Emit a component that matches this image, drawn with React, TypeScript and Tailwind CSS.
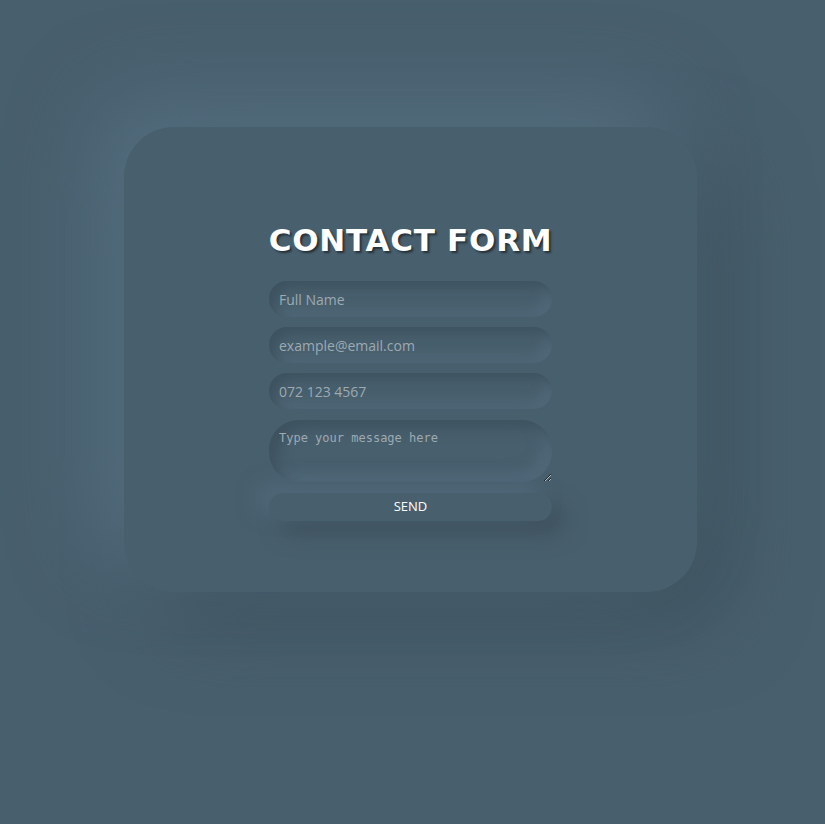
export default function App() {
  const field =
    'w-full h-[36px] rounded-full bg-[#485f6d] px-[10px] text-[14px] text-[#e6ecef] placeholder:text-[#9daab2] outline-none shadow-[inset_6px_6px_12px_#3e525f,inset_-6px_-6px_12px_#51697a]'

  return (
    <div className="min-h-[824px] bg-[#485f6d] pt-[127px] font-['Open_Sans',sans-serif]">
      {/* Card */}
      <div className="ml-[124px] w-[573px] h-[465px] rounded-[50px] bg-[#485f6d] shadow-[-30px_-30px_80px_#536d7e,30px_30px_80px_#3e525e] flex flex-col items-center pt-[93px]">
        <h1 className="font-['DejaVu_Sans',sans-serif] font-bold text-[31px] leading-[40px] tracking-[0.75px] text-white [text-shadow:2px_2px_2px_#26323a]">
          CONTACT FORM
        </h1>

        <form className="mt-[21px] w-[283px] flex flex-col gap-[10px]" onSubmit={e => e.preventDefault()}>
          <input type="text" placeholder="Full Name" className={field} />
          <input type="email" placeholder="example@email.com" className={field} />
          <input type="tel" placeholder="072 123 4567" className={field} />
          <textarea
            placeholder="Type your message here"
            className="w-full h-[62px] mt-[1px] rounded-[30px] bg-[#485f6d] px-[10px] pt-[9px] font-['DejaVu_Sans_Mono',monospace] text-[12px] text-[#e6ecef] placeholder:text-[#9daab2] outline-none shadow-[inset_8px_8px_14px_#3e525f,inset_-8px_-8px_14px_#51697a]"
          />
          <button
            type="submit"
            className="w-full h-[28px] mt-[1px] rounded-full bg-[#485f6d] text-[13px] text-white uppercase shadow-[-12px_-8px_20px_#50687a,12px_12px_22px_#3e515d]"
          >
            Send
          </button>
        </form>
      </div>
    </div>
  )
}
